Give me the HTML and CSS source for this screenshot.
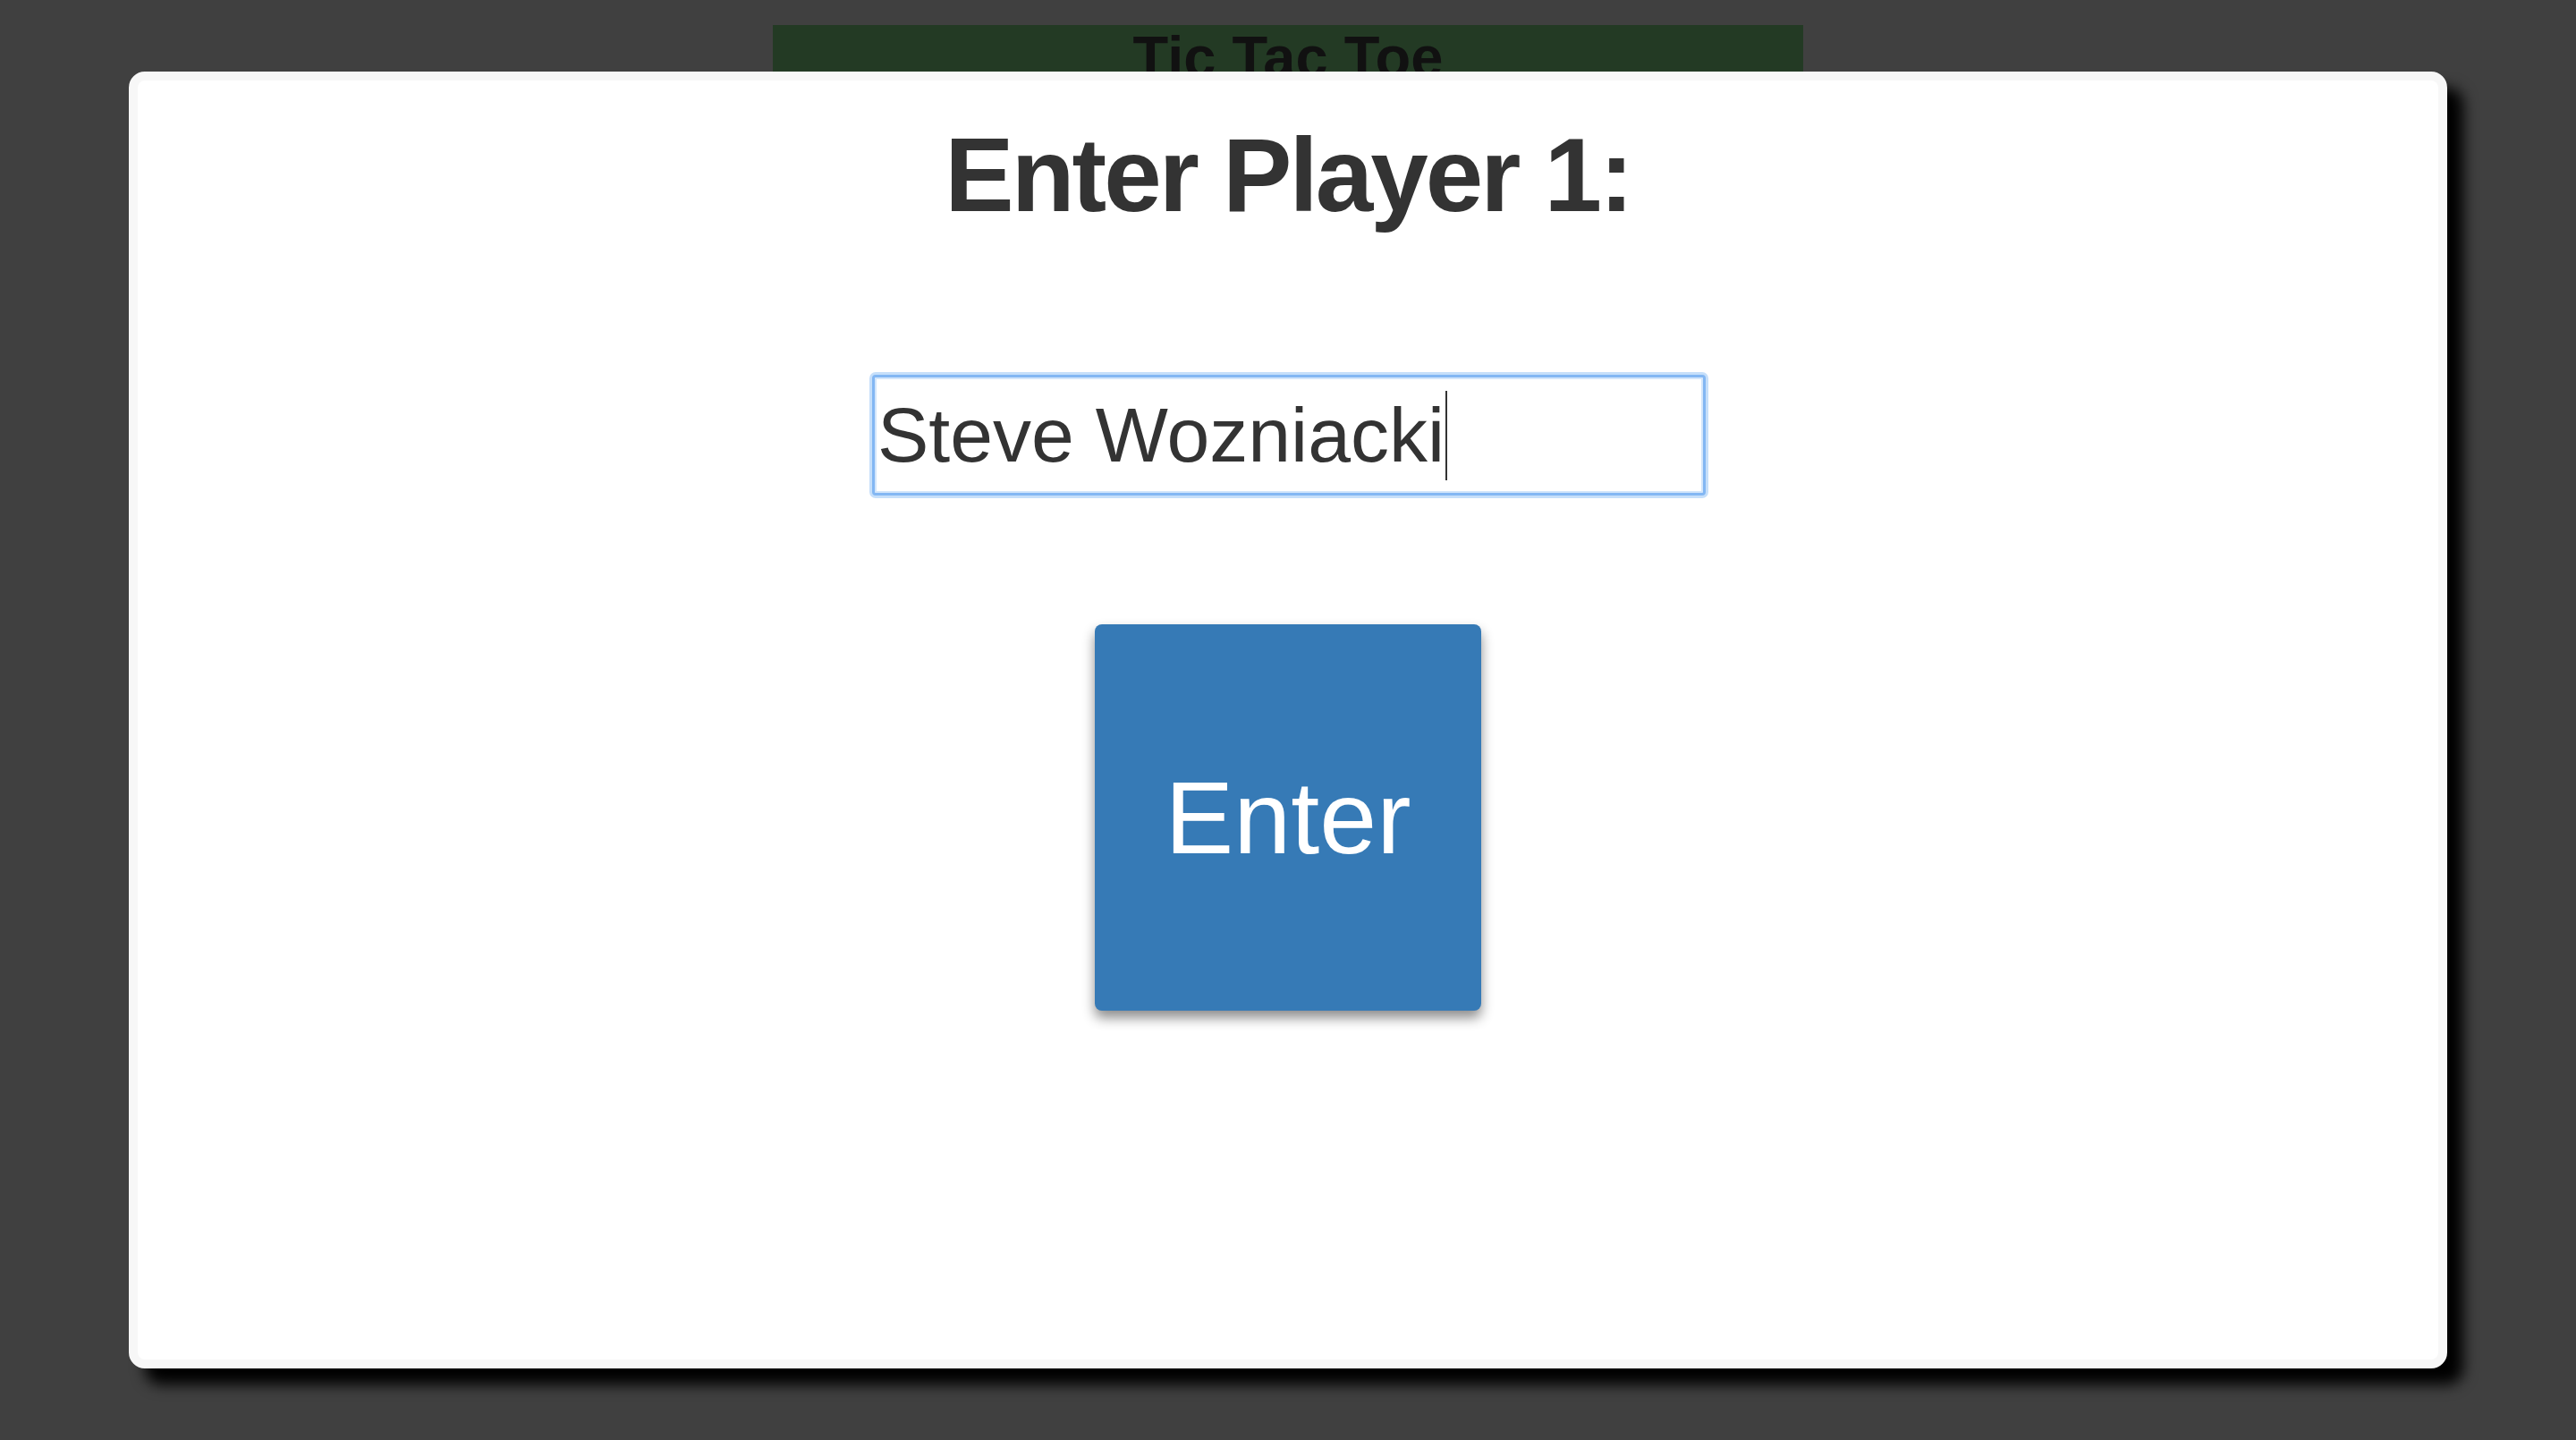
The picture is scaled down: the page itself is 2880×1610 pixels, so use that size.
FILE: index.html
```html
<!DOCTYPE html>
<html lang="en">
<head>
<meta charset="utf-8">
<title>Tic Tac Toe</title>
<link rel="stylesheet" href="styles.css">
</head>
<body>
  <header class="title-bar">
    <h1 class="title">Tic Tac Toe</h1>
  </header>

  <div class="modal" role="dialog" aria-labelledby="prompt">
    <h2 class="prompt" id="prompt">Enter Player 1:</h2>
    <div class="field" role="textbox"><span class="field-text">Steve Wozniacki</span><span class="caret"></span></div>
    <button class="enter-btn" type="button">Enter</button>
  </div>
</body>
</html>
```

FILE: styles.css
```css
html, body {
  margin: 0;
  padding: 0;
}

body {
  width: 2880px;
  height: 1610px;
  background: #404040;
  font-family: "Liberation Sans", Arial, Helvetica, sans-serif;
  color: #333;
  overflow: hidden;
}

.title-bar {
  width: 1152px;
  margin: 28px auto 0;
  padding: 3px 0 40px;
  background: #233a24;
  text-align: center;
}

.title {
  margin: 0;
  font-size: 65px;
  line-height: 1;
  font-weight: bold;
  color: #111;
}

.modal {
  position: fixed;
  top: 80px;
  left: 144px;
  right: 144px;
  bottom: 80px;
  box-sizing: border-box;
  border: 10px solid #f7f7f7;
  border-radius: 18px;
  background: #fff;
  box-shadow: 18px 18px 16px #000;
  display: flex;
  flex-direction: column;
  align-items: center;
}

.prompt {
  margin: 42px 0 0;
  font-size: 116px;
  line-height: 128px;
  font-weight: bold;
  letter-spacing: -3px;
  color: #333;
}

.field {
  margin-top: 159px;
  margin-left: 2px;
  box-sizing: border-box;
  width: 932px;
  height: 135px;
  border: 3px solid #83b7f3;
  border-radius: 4px;
  box-shadow: 0 0 0 3px #c6dffa, inset 0 0 0 2px #d3e6fb;
  background: #fff;
  display: flex;
  align-items: center;
  padding-left: 3px;
  font-size: 86px;
  color: #333;
}

.field-text {
  white-space: pre;
}

.caret {
  display: inline-block;
  width: 2px;
  height: 100px;
  margin-left: 1px;
  background: #333;
}

.enter-btn {
  margin-top: 144px;
  width: 432px;
  height: 432px;
  border: none;
  border-radius: 8px;
  background: #367ab6;
  color: #fff;
  font-family: "Liberation Sans", Arial, Helvetica, sans-serif;
  font-size: 115px;
  padding: 0;
  box-shadow: 0 8px 14px rgba(0, 0, 0, 0.45);
}
```
